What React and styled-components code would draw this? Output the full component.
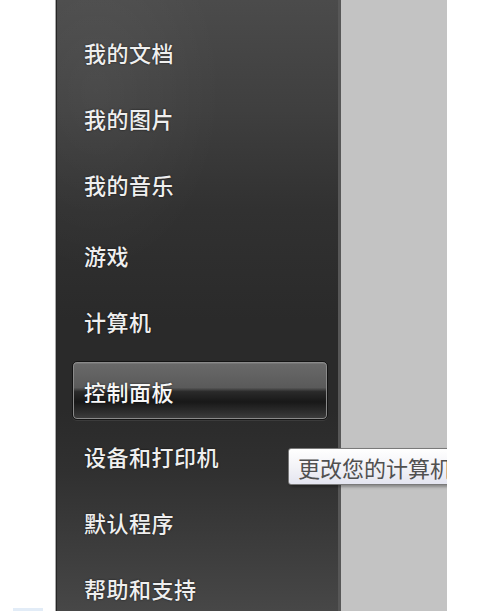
import React from "react";
import styled, { createGlobalStyle, css } from "styled-components";

const Global = createGlobalStyle`
  html, body { margin: 0; padding: 0; background: #ffffff; }
  body { font-family: "Noto Sans CJK SC", "Noto Sans", sans-serif; }
`;

const Frame = styled.div`
  position: relative;
  width: 447px;
  height: 611px;
  display: flex;
  overflow: hidden;
`;

const Gutter = styled.div`
  width: 55px;
  flex: none;
  background: #ffffff;
  display: flex;
  flex-direction: column;
  justify-content: flex-end;
  padding-left: 13px;
  box-sizing: border-box;
`;

const GutterMark = styled.div`
  width: 30px;
  height: 3px;
  background: #e2ecf7;
`;

const Panel = styled.div`
  width: 286px;
  flex: none;
  box-sizing: border-box;
  border-left: 1px solid #a9a9a9;
  border-right: 3px solid #575757;
  box-shadow: inset 1px 0 0 #262626, 1px 0 0 #3c3c3c;
  background:
    radial-gradient(ellipse 180px 260px at 40px 90px, rgba(255,255,255,0.05), rgba(255,255,255,0) 70%),
    linear-gradient(180deg, #4b4b4b 0px, #3f3f3f 110px, #313131 210px, #2a2a2a 320px, #2a2a2a 410px, #303030 470px, #3d3d3d 550px, #474747 611px);
  padding: 19px 10px 0 16px;
  display: flex;
  flex-direction: column;
`;

const Item = styled.div`
  height: 66px;
  flex: none;
  box-sizing: border-box;
  display: flex;
  align-items: center;
  padding-left: 12px;
  font-size: 22px;
  font-weight: 500;
  color: #efefef;
  text-shadow: 0 0 2px rgba(0, 0, 0, 0.7);
  letter-spacing: 0.5px;
  white-space: nowrap;
  ${(p) =>
    p.$active &&
    css`
      height: 59px;
      margin: 7px 0 3px;
      border-radius: 5px;
      border: 1px solid #141414;
      box-shadow: inset 0 0 0 1px #8a8a8a, inset 0 2px 0 #767676, 0 1px 0 rgba(255,255,255,0.08);
      background: linear-gradient(
        180deg,
        #6a6a6a 0%,
        #5a5a5a 45%,
        #2a2a2a 52%,
        #181818 70%,
        #2e2e2e 88%,
        #3e3e3e 100%
      );
      padding-left: 11px;
      color: #f7f7f7;
    `}
`;

const Separator = styled.div`
  height: 1px;
  margin: 3px 10px 2px 12px;
  background: #505050;
  box-shadow: 0 1px 0 #1c1c1c;
`;

const GrayArea = styled.div`
  flex: 1;
  background: #c3c3c3;
`;

const Tooltip = styled.div`
  position: absolute;
  left: 288px;
  top: 448px;
  height: 37px;
  box-sizing: border-box;
  padding: 0 10px 0 9px;
  display: flex;
  align-items: center;
  border: 1px solid #7a7a7a;
  border-radius: 3px;
  background: linear-gradient(180deg, #ffffff 0%, #f3f3f7 50%, #e4e5f0 100%);
  box-shadow: 2px 2px 3px rgba(0, 0, 0, 0.3);
  font-size: 22px;
  color: #505050;
  white-space: nowrap;
`;

const top = ["我的文档", "我的图片", "我的音乐"];
const bottom = [
  { label: "游戏" },
  { label: "计算机" },
  { label: "控制面板", active: true },
  { label: "设备和打印机" },
  { label: "默认程序" },
  { label: "帮助和支持" },
];

export default function App() {
  return (
    <>
      <Global />
      <Frame>
        <Gutter>
          <GutterMark />
        </Gutter>
        <Panel>
          {top.map((t) => (
            <Item key={t}>{t}</Item>
          ))}
          <Separator />
          {bottom.map((b) => (
            <Item key={b.label} $active={b.active}>
              {b.label}
            </Item>
          ))}
        </Panel>
        <GrayArea />
        <Tooltip>更改您的计算机设置并自定义其功能。</Tooltip>
      </Frame>
    </>
  );
}
